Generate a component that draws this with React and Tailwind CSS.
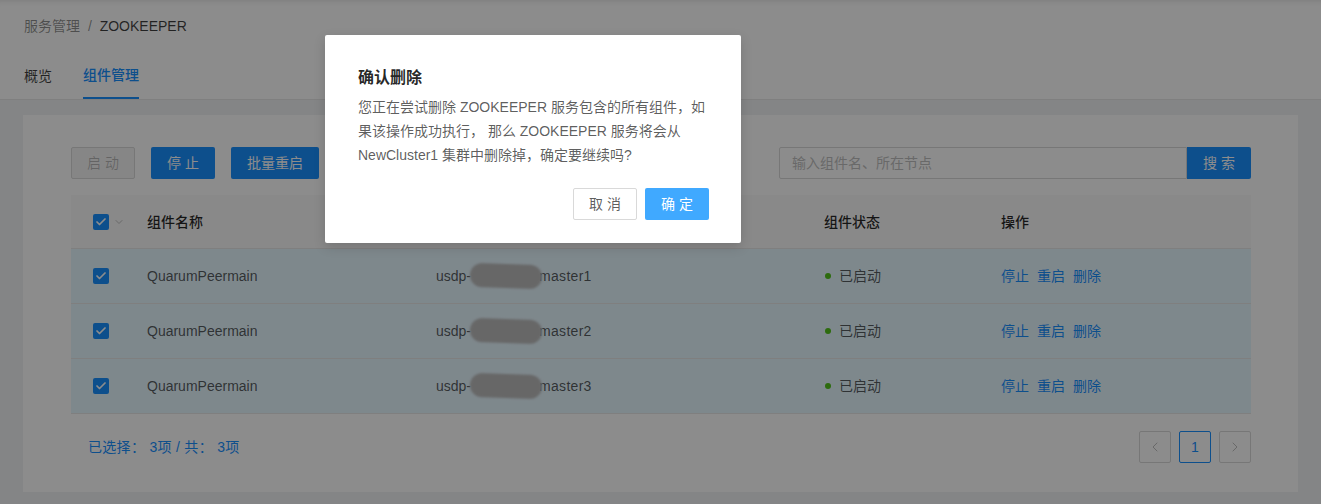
import React from "react";
import { ChevronDown, ChevronLeft, ChevronRight, Check } from "lucide-react";

const font = { fontFamily: '"Liberation Sans", "Noto Sans CJK SC", sans-serif' };

const rows = [
  { name: "QuarumPeermain", host: "master1" },
  { name: "QuarumPeermain", host: "master2" },
  { name: "QuarumPeermain", host: "master3" },
];

const Checkbox = () => (
  <span className="inline-flex w-4 h-4 items-center justify-center rounded-[2px] bg-[#1890ff]">
    <Check className="w-3 h-3 text-white" strokeWidth={3.5} />
  </span>
);

const App = () => {
  return (
    <div className="relative w-full h-[504px] overflow-hidden bg-[#f0f2f5] text-sm" style={font}>
      {/* page header */}
      <div className="bg-white h-[100px] px-6 border-b border-[#e8e8e8] shadow-[inset_0_6px_6px_-6px_rgba(0,0,0,0.15)]">
        <div className="pt-4 leading-5 text-[rgba(0,0,0,0.45)]">
          服务管理 <span className="mx-1">/</span>{" "}
          <span className="text-[rgba(0,0,0,0.75)]">ZOOKEEPER</span>
        </div>
        <div className="flex mt-4 h-12 gap-8">
          <div className="flex items-center text-[rgba(0,0,0,0.75)]">概览</div>
          <div className="flex items-center text-[#1890ff] font-medium border-b-2 border-[#1890ff] h-[47px] pt-[1px] -ml-px">
            组件管理
          </div>
        </div>
      </div>

      {/* card */}
      <div className="mx-[23px] mt-[15px] bg-white h-[377px] pl-12 pr-[47px] pt-8">
        <div className="flex items-center h-8">
          <button className="w-16 h-8 rounded-[2px] border border-[#d9d9d9] bg-[#f5f5f5] text-[rgba(0,0,0,0.25)] tracking-[4px] pl-1">
            启动
          </button>
          <button className="ml-4 w-16 h-8 rounded-[2px] bg-[#1890ff] text-white tracking-[4px] pl-1">
            停止
          </button>
          <button className="ml-4 w-[88px] h-8 rounded-[2px] bg-[#1890ff] text-white">
            批量重启
          </button>
          <div className="ml-auto flex">
            <div className="w-[408px] h-8 border border-[#d9d9d9] rounded-l-[2px] px-3 flex items-center text-[#bfbfbf]">
              输入组件名、所在节点
            </div>
            <button className="w-16 h-8 rounded-r-[2px] bg-[#1890ff] text-white tracking-[4px] pl-1">
              搜索
            </button>
          </div>
        </div>

        {/* table */}
        <div className="mt-4">
          <div className="flex items-center h-[54px] bg-[#fafafa] border-b border-[#e8e8e8] font-medium text-[rgba(0,0,0,0.85)]">
            <div className="w-[76px] pl-[22px] flex items-center gap-1">
              <Checkbox />
              <ChevronDown className="w-3 h-3 text-[#bfbfbf]" />
            </div>
            <div className="w-[289px]">组件名称</div>
            <div className="w-[388px]">所在节点</div>
            <div className="w-[177px]">组件状态</div>
            <div className="flex-1">操作</div>
          </div>
          {rows.map((r, i) => (
            <div
              key={i}
              className="flex items-center h-[55px] bg-[#e6f7ff] border-b border-[#e8e8e8] text-[rgba(0,0,0,0.65)]"
            >
              <div className="w-[76px] pl-[22px] flex items-center">
                <Checkbox />
              </div>
              <div className="w-[289px]">{r.name}</div>
              <div className="w-[388px] flex items-center">
                usdp-
                <span className="inline-block w-[72px] h-[24px] -ml-px -mr-[3px] rounded-full bg-[#bcbcbc] blur-[1px] rotate-[2deg]" />
                <span className="tracking-[0.3px]">{r.host}</span>
              </div>
              <div className="w-[177px] flex items-center">
                <span className="w-[6px] h-[6px] rounded-full bg-[#52c41a] ml-[1px] mr-[8px]" />
                已启动
              </div>
              <div className="flex-1 flex gap-2 text-[#1890ff]">
                <span>停止</span>
                <span>重启</span>
                <span>删除</span>
              </div>
            </div>
          ))}
        </div>

        {/* footer */}
        <div className="flex items-center h-8 mt-[17px]">
          <div className="pl-[17px] text-[#1890ff] tracking-[0.3px]">已选择： 3项 / 共： 3项</div>
          <div className="ml-auto flex gap-2">
            <div className="w-8 h-8 border border-[#d9d9d9] rounded-[2px] flex items-center justify-center text-[#bfbfbf]">
              <ChevronLeft className="w-4 h-4" strokeWidth={1.5} />
            </div>
            <div className="w-8 h-8 border border-[#1890ff] rounded-[2px] flex items-center justify-center text-[#1890ff]">
              1
            </div>
            <div className="w-8 h-8 border border-[#d9d9d9] rounded-[2px] flex items-center justify-center text-[#bfbfbf]">
              <ChevronRight className="w-4 h-4" strokeWidth={1.5} />
            </div>
          </div>
        </div>
      </div>

      {/* mask */}
      <div className="absolute inset-0 bg-black/45" />

      {/* modal */}
      <div className="absolute left-[325px] top-[35px] w-[416px] bg-white rounded-[2px] shadow-[0_4px_12px_rgba(0,0,0,0.15)] pl-[33px] pr-8 pt-8 pb-[23px]">
        <div className="text-base font-bold leading-[22px] text-[rgba(0,0,0,0.85)]">确认删除</div>
        <div className="mt-[6px] leading-6 text-[rgba(0,0,0,0.65)]">
          您正在尝试删除 ZOOKEEPER 服务包含的所有组件，如
          <br />
          果该操作成功执行， 那么 ZOOKEEPER 服务将会从
          <br />
          NewCluster1 集群中删除掉，确定要继续吗?
        </div>
        <div className="flex justify-end gap-2 mt-[21px]">
          <button className="w-16 h-8 rounded-[2px] border border-[#d9d9d9] bg-white text-[rgba(0,0,0,0.65)] tracking-[4px] pl-1">
            取消
          </button>
          <button className="w-16 h-8 rounded-[2px] bg-[#40a9ff] text-white tracking-[4px] pl-1">
            确定
          </button>
        </div>
      </div>
    </div>
  );
};

export default App;
